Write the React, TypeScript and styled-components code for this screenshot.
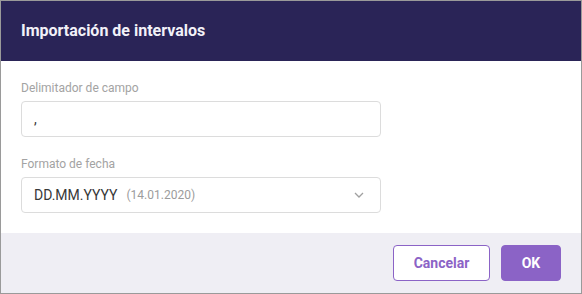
import React from 'react';
import styled, { createGlobalStyle } from 'styled-components';

const GlobalStyle = createGlobalStyle`
  * { box-sizing: border-box; }
  body {
    margin: 0;
    font-family: Roboto, "Liberation Sans", sans-serif;
    background: #fff;
  }
`;

const Dialog = styled.div`
  width: 582px;
  height: 294px;
  border: 1px solid #9a9a9a;
  display: flex;
  flex-direction: column;
  background: #fff;
`;

const Header = styled.div`
  height: 60px;
  flex-shrink: 0;
  background: #2a2457;
  display: flex;
  align-items: center;
  padding: 0 20px 2px;
`;

const Title = styled.h1`
  margin: 0;
  font-size: 16px;
  font-weight: 700;
  color: #f2f1f8;
`;

const Body = styled.div`
  flex: 1;
  padding: 19px 20px 20px;
  display: flex;
  flex-direction: column;
  gap: 19px;
`;

const Field = styled.div`
  display: flex;
  flex-direction: column;
  gap: 5px;
`;

const Label = styled.label`
  font-size: 12px;
  line-height: 16px;
  color: #a3a3a3;
`;

const Input = styled.div`
  width: 360px;
  height: 36px;
  border: 1px solid #dcdcdc;
  border-radius: 4px;
  padding: 0 12px;
  display: flex;
  align-items: center;
  font-size: 14px;
  color: #383838;
`;

const Hint = styled.span`
  margin-left: 9px;
  font-size: 12px;
  color: #9c9c9c;
`;

const Chevron = styled.span`
  margin-left: auto;
  margin-right: 4px;
  display: flex;
  color: #a0a0a0;
`;

const Footer = styled.div`
  height: 60px;
  flex-shrink: 0;
  background: #efeef4;
  display: flex;
  justify-content: flex-end;
  align-items: center;
  gap: 11px;
  padding: 0 20px 0 0;
`;

const Button = styled.button<{ $primary?: boolean }>`
  height: 36px;
  width: ${p => (p.$primary ? '60px' : '97px')};
  padding: 0;
  border-radius: 4px;
  border: 1px solid #8b63c6;
  background: ${p => (p.$primary ? '#8b63c6' : '#fff')};
  color: ${p => (p.$primary ? '#fff' : '#8b63c6')};
  font-family: Roboto, "Liberation Sans", sans-serif;
  font-size: 14px;
  font-weight: 700;
  cursor: pointer;
`;

export default function App() {
  return (
    <>
      <GlobalStyle />
      <Dialog>
        <Header>
          <Title>Importación de intervalos</Title>
        </Header>
        <Body>
          <Field>
            <Label>Delimitador de campo</Label>
            <Input>,</Input>
          </Field>
          <Field>
            <Label>Formato de fecha</Label>
            <Input>
              DD.MM.YYYY
              <Hint>(14.01.2020)</Hint>
              <Chevron>
                <svg width="10" height="6" viewBox="0 0 10 6" fill="none">
                  <path d="M1 1l4 4 4-4" stroke="currentColor" strokeWidth="1.3" />
                </svg>
              </Chevron>
            </Input>
          </Field>
        </Body>
        <Footer>
          <Button>Cancelar</Button>
          <Button $primary>OK</Button>
        </Footer>
      </Dialog>
    </>
  );
}
